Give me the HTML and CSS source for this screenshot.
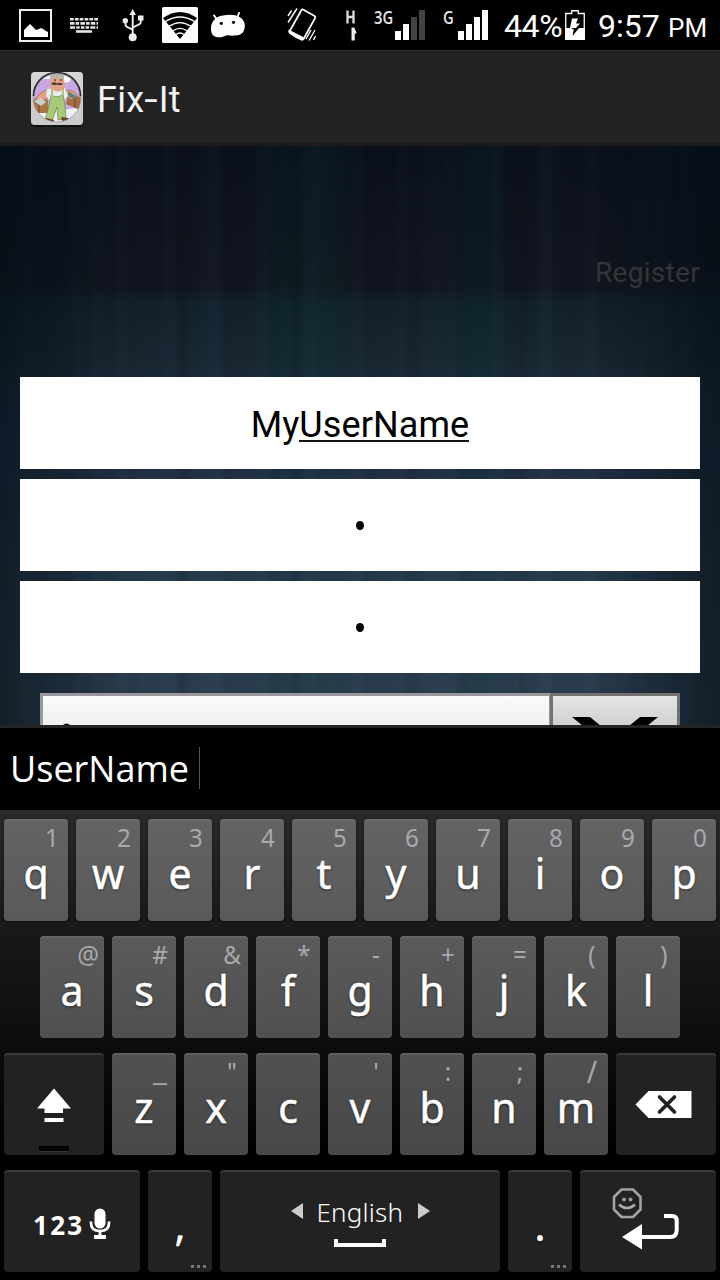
FILE: index.html
```html
<!DOCTYPE html>
<html lang="en">
<head>
<meta charset="utf-8">
<title>Fix-It</title>
<link rel="stylesheet" href="styles.css">
</head>
<body>
<div class="screen">
  <header class="status">
    <svg class="ic-picture" width="33" height="33" viewBox="19 9 33 33"><rect x="20" y="10" width="31" height="31" fill="none" stroke="#eee" stroke-width="2"/><path d="M24 37V30l3-3 1-1 1-1 1-1 2 2 2 2 2 2 3-1 2-1 2 1 3 2 2 1v5z" fill="#fff"/></svg>
    <svg class="ic-keyboard" width="30" height="17" viewBox="69 17 30 17"><g stroke="#e4e4e4" stroke-width="2.600" fill="none"><path d="M70 19.200h28" stroke-dasharray="3.700 1.160"/><path d="M70 23.400h28" stroke-dasharray="4.500 1.200 3.500 1.200"/><path d="M70 27.500h28" stroke-dasharray="5 1.200 3.500 1.200 3.500 1.200 3.500 1.200"/><path d="M76 31.500h16"/></g></svg>
    <svg class="ic-usb" width="23" height="33" viewBox="122 9 23 33"><g fill="none" stroke="#eee" stroke-width="1.900"><path d="M132.700 38V14M125.500 22v2.500q0 1.800 2 2.700l5.200 2.500M140.800 19v3q0 1.700-2 2.500l-6 2.800"/></g><g fill="#eee"><path d="M132.700 9l3.300 6h-6.600z"/><circle cx="132.700" cy="37.300" r="4"/><circle cx="125.300" cy="20.700" r="2.700"/><path d="M138 15.500h5.500v5H138z"/></g></svg>
    <svg class="ic-wifi" width="36" height="36" viewBox="162 7 36 36"><rect x="162" y="7" width="36" height="36" rx="1.500" fill="#fff"/><path d="M180 39L163 18Q180 6 197 18z"/><g fill="none" stroke="#fff" stroke-width="1.300"><path d="M165.500 21.500q14.500-9 29 0M169 26.300q11-7.500 22 0M173 30.800q7-5 14 0M176 34.500q4-3 8 0"/></g></svg>
    <svg class="ic-android" width="36" height="28" viewBox="210 11 36 28"><g stroke="#fff" stroke-width="2" stroke-linecap="round"><path d="M214 15.500l3 4M239 13l-1.700 4.500"/></g><path d="M211 30C210.500 22 215 16.500 223 15.500C233 13.500 243 15.500 244.700 24C245.500 31 242 35.500 235 35.500C231 36 229 35 226 35.500C221 38.500 211.500 38.500 211 30z" fill="#fff"/><circle cx="221.300" cy="23.300" r="1.600"/><circle cx="233.500" cy="22.300" r="1.600"/></svg>
    <svg class="ic-vibrate" width="30" height="35" viewBox="287 7 30 35"><path d="M303 9.500L314.500 16Q315.800 17 315 18.300L303.500 39 289.500 31.500 301.500 10Q302 9 303 9.500z" fill="none" stroke="#fff" stroke-width="1.700"/><path d="M288.500 29.500L304 37.500l-1.500 3.500q-7-2.500-13.500-7.500-.9-1-.5-4z" fill="#fff"/><path d="M297 8.500l-9 14M291.500 10.500l-3.500 5.500M315 30l-6 10.500M311 30l-5 9M315.500 36l-2 4" fill="none" stroke="#fff" stroke-width="1.400"/></svg>
    <svg class="ic-data" width="13" height="33" viewBox="345 9 13 33"><path d="M347.500 10.500v13M353.500 10.500v13M347.500 17h6" stroke="#ddd" stroke-width="2.300" fill="none"/><path d="M351.500 40.500v-13h2.800l2.500 6h-2v7z" fill="#eee"/></svg>
    <span class="net net-a">3G</span>
    <svg class="bars" width="30" height="30" viewBox="0 0 30 30"><path d="M0 21h6v9H0zM8 14h6v16H8z" fill="#fff"/><path d="M16 7h6v23h-6zM24 0h6v30h-6z" fill="#424242"/></svg>
    <span class="net net-b">G</span>
    <svg class="bars" width="30" height="30" viewBox="0 0 30 30"><path d="M0 21h6v9H0zM8 14h6v16H8zM16 7h6v23h-6zM24 0h6v30h-6z" fill="#fff"/></svg>
    <span class="percent">44%</span>
    <svg class="ic-battery" width="20" height="30" viewBox="0 0 20 30"><path d="M.75 29V3.500h6V.75h6.500V3.500h6V29z" fill="none" stroke="#fff" stroke-width="1.300"/><path d="M0 18h20v12H0z" fill="#fff"/><path d="M7 8.500h6l-2 5h4L11 18H5z" fill="#fff"/><path d="M6 18h8L7.500 26l1.300-6.500z"/></svg>
    <span class="time">9:57</span><span class="meridiem">PM</span>
  </header>

  <div class="actionbar">
    <svg class="app-icon" width="56" height="58" viewBox="0 0 56 58">
      <defs><clipPath id="disc"><circle cx="27" cy="27" r="24"/></clipPath><linearGradient id="tile" x2="0" y2="1"><stop offset="0" stop-color="#d6d6d6"/><stop offset="1" stop-color="#c9c9c9"/></linearGradient></defs>
      <rect x="1" y="3" width="52" height="53" rx="4" fill="#111"/>
      <rect x="1" y="1" width="52" height="53" rx="3.500" fill="url(#tile)"/>
      <g clip-path="url(#disc)">
        <path d="M0 0h56v56H0z" fill="#f3eff7"/><path d="M0 8h56v24q-14 8-28 6T0 34z" fill="#c8a8e2"/>
        <path d="M33 5l10 0-4 6-10 2z" fill="#fff"/>
        <path d="M3 29l6-3 9 3v13H3z" fill="#aa7445"/><path d="M38 24l13 2-1 13-14-6z" fill="#a36e43"/><path d="M45 26v11M9 30v12" stroke="#75472b"/>
        <path d="M17 19q-8 2-11 9l4 4 9-6M36 19q9 0 11 6l-5 4-7-4" fill="#e8a17f" stroke="#8b5945" stroke-width=".6"/>
        <path d="M4 30l7-3 5 4-5 4z" fill="#c2d3d2"/><path d="M38 20l8 5-3 3-5-3z" fill="#59857a"/>
        <path d="M17 18l18-1 3 8-5 5H20l-4-5z" fill="#e9edf2"/>
        <path d="M21 24q7 4 12-1l2 12 1 13-8 1-1-13-5 14-7-1 4-14z" fill="#a7cb76" stroke="#648347" stroke-width=".7"/>
        <path d="M22 17v9M33 16v8" stroke="#a7cb76" stroke-width="2"/>
        <path d="M16 47l8 2v4l-9-1zM31 46l7 1 4 3-9 2z" fill="#674126"/>
        <ellipse cx="27.500" cy="12.500" rx="7.500" ry="8" fill="#e6a083"/><path d="M20 9V5q7-6 14 0v4l-7-2z" fill="#b9b7aa"/>
        <path d="M21 13q3-3 6-.5 4-2 6 1-3 1-6 0-3 1-6-.5z" fill="#443b3d"/><path d="M24 9h2M30 9h2" stroke="#222" stroke-width="1.200"/>
      </g>
      <circle cx="27" cy="27" r="24" fill="none" stroke="#999" stroke-width=".8"/><path d="M3.500 25a23.500 23.500 0 0 1 47 0" fill="none" stroke="#292929" stroke-width="1.600"/>
    </svg>
    <h1 class="title">Fix<span class="hyphen">-</span>It</h1>
  </div>

  <main class="form">
    <div class="register">Register</div>
    <div class="field">My<span class="composing">UserName</span></div>
    <div class="field"><i class="dot"></i></div>
    <div class="field"><i class="dot"></i></div>
    <div class="spinner">
      <div class="spinner-value"><svg width="20" height="4" viewBox="0 0 20 4"><path d="M4 3q4.500-5 9 0z"/></svg></div>
      <div class="spinner-button"><svg width="86" height="9" viewBox="0 0 86 9"><path d="M0 0h18l11 9H11zM68 0h18L75 9H57z"/></svg></div>
    </div>
  </main>

  <section class="suggest"><span class="word">UserName</span><i class="divider"></i></section>

  <section class="keyboard">
    <div class="row">
      <div class="key"><small>1</small><b>q</b></div><div class="key"><small>2</small><b>w</b></div><div class="key"><small>3</small><b>e</b></div><div class="key"><small>4</small><b>r</b></div><div class="key"><small>5</small><b>t</b></div><div class="key"><small>6</small><b>y</b></div><div class="key"><small>7</small><b>u</b></div><div class="key"><small>8</small><b>i</b></div><div class="key"><small>9</small><b>o</b></div><div class="key"><small>0</small><b>p</b></div>
    </div>
    <div class="row row-mid">
      <div class="key k2"><small>@</small><b>a</b></div><div class="key k2"><small>#</small><b>s</b></div><div class="key k2"><small>&amp;</small><b>d</b></div><div class="key k2"><small>*</small><b>f</b></div><div class="key k2"><small>-</small><b>g</b></div><div class="key k2"><small>+</small><b>h</b></div><div class="key k2"><small>=</small><b>j</b></div><div class="key k2"><small>(</small><b>k</b></div><div class="key k2"><small>)</small><b>l</b></div>
    </div>
    <div class="row">
      <div class="key dark wide icon-key"><svg width="100" height="102" viewBox="4 1053 100 102"><path d="M58 1088.500l17 20h-8v4.500H48.500v-4.500H41z" transform="translate(-4 0)" fill="#fff"/><path d="M44.500 1118h19v4h-19z" fill="#fff"/><path d="M39 1146h30v5H39z" fill="#000"/><path d="M39 1151.500h30" stroke="#333"/></svg></div>
      <div class="key k3"><small class="under">_</small><b>z</b></div><div class="key k3"><small>"</small><b>x</b></div><div class="key k3"><small></small><b>c</b></div><div class="key k3"><small>'</small><b>v</b></div><div class="key k3"><small>:</small><b>b</b></div><div class="key k3"><small>;</small><b>n</b></div><div class="key k3"><small class="slash">/</small><b>m</b></div>
      <div class="key dark wide icon-key"><svg width="100" height="102" viewBox="616 1053 100 102"><path d="M635.500 1104.500l13-13.500h43v27h-43z" fill="#fff"/><path d="M659.500 1097l15 15M674.500 1097l-15 15" stroke="#222" stroke-width="3.600" stroke-linecap="round"/></svg></div>
    </div>
    <div class="row">
      <div class="key dark mode"><span class="digits">123</span><svg width="22" height="32" viewBox="89 1208 22 32"><rect x="94.500" y="1208.500" width="11" height="20" rx="5.500" fill="#fff"/><path d="M91 1221.500v1.500q0 8 9 8t9-8v-1.500" fill="none" stroke="#fff" stroke-width="2.700"/><path d="M98.500 1231h3v4h4.500v4H94v-4h4.500z" fill="#fff"/></svg></div>
      <div class="key dark punct"><b>,</b><span class="more"><i></i><i></i><i></i></span></div>
      <div class="key dark space">
        <div class="lang"><svg width="12" height="16" viewBox="0 0 12 16"><path d="M12 0v16L0 8z" fill="#ccc"/></svg><span>English</span><svg width="12" height="16" viewBox="0 0 12 16"><path d="M0 0v16l12-8z" fill="#ccc"/></svg></div>
        <svg class="bracket" width="52" height="9" viewBox="0 0 52 9"><path d="M2 0v6h48V0" fill="none" stroke="#fff" stroke-width="4"/></svg>
      </div>
      <div class="key dark punct"><b>.</b><span class="more"><i></i><i></i><i></i></span></div>
      <div class="key dark enter icon-key"><svg width="136" height="102" viewBox="580 1170 136 102"><path d="M621.500 1189.500h11.500l7.500 7.500v12.500l-7.500 7.500h-11.500l-7.500-7.500V1197z" fill="none" stroke="#a2a2a2" stroke-width="2.600" stroke-linejoin="round"/><path d="M619 1204.500q8 7 16 0" fill="none" stroke="#aaa" stroke-width="2.600"/><circle cx="624" cy="1199.500" r="2" fill="#999"/><circle cx="630.500" cy="1199.500" r="2" fill="#999"/><path d="M664 1216h8q4.700 0 4.700 4.500v9.500q0 7-6.700 7h-30" fill="none" stroke="#fff" stroke-width="4"/><path d="M622 1237l20-13v25.500z" fill="#fff"/></svg></div>
    </div>
  </section>
</div>
</body>
</html>
```
FILE: styles.css
```css
* { box-sizing: border-box; }
body { margin: 0; background: #000; font-family: Roboto, sans-serif; }
svg { display: block; flex: none; }
.screen { width: 720px; height: 1280px; overflow: hidden; display: flex; flex-direction: column; }
.status { height: 50px; flex: none; display: flex; align-items: flex-start; background: #000; color: #fff; white-space: nowrap; }
.ic-picture { margin: 9px 0 0 19px; }
.ic-keyboard { margin: 17px 0 0 17px; }
.ic-usb { margin: 9px 0 0 23px; }
.ic-wifi { margin: 7px 0 0 17px; }
.ic-android { margin: 11px 0 0 12px; }
.ic-vibrate { margin: 7px 0 0 41px; }
.ic-data { margin: 9px 0 0 28px; }
.net { font: 600 18px/20px "Open Sans", sans-serif; color: #e4e4e4; margin-top: 7px; transform-origin: 0 50%; transform: scaleX(.82); }
.net-a { width: 21px; margin-left: 16px; }
.net-b { width: 15px; margin-left: 18px; }
.bars { margin-top: 10px; }
.percent { width: 61px; margin-left: 16px; font-size: 32px; line-height: 36px; margin-top: 8px; letter-spacing: -.4px; }
.ic-battery { margin-top: 10px; }
.time { width: 70px; margin-left: 13px; font-size: 32px; line-height: 36px; margin-top: 8px; }
.meridiem { font-size: 26px; line-height: 30px; margin-top: 13px; }
.actionbar { height: 96px; flex: none; display: flex; background: #222; border-top: 1px solid #2e2e2e; border-bottom: 3px solid #1b1b1b; }
.app-icon { margin: 20px 0 0 30px; }
.title { margin: 28px 0 0 11px; color: #f3f3f3; font-size: 36px; line-height: 42px; font-weight: 400; letter-spacing: .3px; }
.hyphen { display: inline-block; transform: scaleX(1.35); margin: 0 2px; }
.form {
  height: 579px; flex: none; overflow: hidden; display: flex; flex-direction: column;
  background:
    linear-gradient(90deg, rgba(2,12,20,.6) 0, rgba(2,12,20,.42) 40px, transparent 140px, transparent 590px, rgba(2,12,20,.45) 680px, rgba(2,12,20,.6)),
    repeating-linear-gradient(90deg, rgba(105,135,160,0) 0 19px, rgba(105,135,160,.025) 24px 32px, rgba(0,8,18,.04) 37px 43px, transparent 47px),
    repeating-linear-gradient(90deg, transparent 0 63px, rgba(0,5,15,.09) 69px, transparent 78px, rgba(92,127,145,.03) 94px, transparent 113px),
    linear-gradient(90deg, transparent 250px, rgba(0,60,50,.13) 275px 340px, transparent 355px 455px, rgba(0,55,50,.15) 465px 495px, transparent 505px),
    linear-gradient(#0a101b, #11151f 140px, #11202b 158px, #182732 222px, #1c2a3c 235px, #203042 330px, #263949 430px, #2b3c4c 540px, #2b3c4c);
}
.register { height: 231px; flex: none; padding: 110px 20px 0; text-align: right; color: #353535; font-size: 28px; line-height: 34px; letter-spacing: .3px; }
.field { height: 92px; margin: 0 20px 10px; flex: none; background: #fff; color: #000; font-size: 36px; line-height: 42px; padding-top: 27px; text-align: center; letter-spacing: .1px; }
.composing { background: linear-gradient(#111, #111) 0 36px / 100% 2px no-repeat; display: inline-block; }
.dot { display: block; width: 8px; height: 9px; border-radius: 50%; background: #000; margin: 15px auto 0; }
.spinner { height: 64px; flex: none; display: flex; margin: 10px 40px 0; }
.spinner-value { width: 510px; border: 3px solid #98989c; border-right-width: 1px; border-bottom: 0; background: linear-gradient(#fafafa, #efefef 32px); }
.spinner-value svg { margin: 27px 0 0 15px; }
.spinner-button { flex: 1; border: 3px solid #727272; border-bottom: 0; background: linear-gradient(#e5e5e5, #cfcfcf 32px); }
.spinner-button svg { margin: 21px 0 0 19px; }
.suggest { height: 85px; flex: none; display: flex; background: #000; border-top: 3px solid #242426; color: #fff; }
.word { width: 189px; padding-left: 10px; margin-top: 17px; font: 36px/48px "Open Sans", sans-serif; }
.divider { width: 1px; height: 42px; margin: 19px 0 0 10px; background: #555; }
.keyboard { height: 470px; flex: none; padding-top: 9px; display: flex; flex-direction: column; gap: 15px; background: linear-gradient(#292929, #181818 120px, #0d0d0d 235px, #000 345px); }
.row { height: 102px; display: flex; gap: 8px; padding: 0 4px; }
.row-mid { padding: 0 40px; }
.key { width: 64px; height: 102px; flex: none; border-radius: 4px; background: linear-gradient(#636363, #5a5a5a); box-shadow: inset 0 2px 1px #6c6c6c, 0 1px 2px rgba(0,0,0,.5); color: #fff; font-family: "Noto Sans", sans-serif; display: flex; flex-direction: column; overflow: hidden; }
.k2 { background: linear-gradient(#5a5a5a, #505050); box-shadow: inset 0 2px 1px #666; }
.k3 { background: linear-gradient(#505050, #484848); box-shadow: inset 0 2px 1px #606060; }
.key small { align-self: flex-end; width: 32px; height: 36px; text-align: center; font-size: 26px; line-height: 36px; color: #a9a9ae; transform: scaleX(.93); }
.key .slash { font-size: 30px; line-height: 37px; }
.key .under { transform: scaleX(1.2); }
.key b { height: 54px; margin-top: -10px; text-align: center; font-size: 41px; line-height: 56px; font-weight: 400; -webkit-text-stroke: .5px #fff; text-shadow: 0 1px 3px rgba(0,0,0,.6); }
.dark { background: #222; box-shadow: inset 0 2px 1px #3b3b3b; }
.wide { width: 100px; }
.icon-key { display: block; }
.mode { width: 136px; flex-direction: row; padding: 38px 0 0 29px; gap: 6px; }
.digits { width: 50px; font: 700 26px/34px "Open Sans", sans-serif; letter-spacing: 2.3px; white-space: nowrap; }
.key.punct b { margin-top: 27px; height: 63px; }
.more { align-self: flex-end; display: flex; gap: 3px; margin: 5px 6px 0 0; }
.more i { width: 3px; height: 3px; background: #777; }
.space { width: 280px; align-items: center; }
.lang { display: flex; align-items: center; justify-content: center; gap: 14px; margin-top: 24px; font-size: 26px; line-height: 36px; }
.lang svg { margin-top: -2px; }
.lang span { width: 87px; font-weight: 300; letter-spacing: .2px; white-space: nowrap; }
.bracket { margin-top: 9px; }
.enter { width: 136px; }
```
